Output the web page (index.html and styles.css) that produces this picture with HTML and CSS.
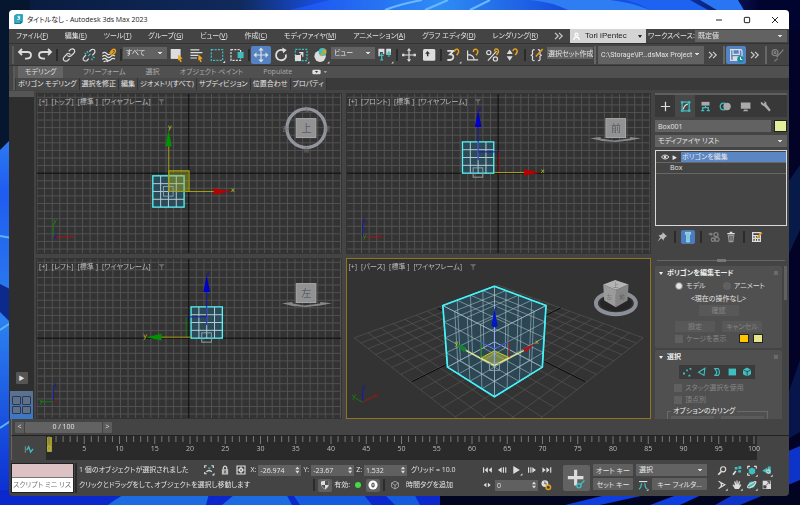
FILE: index.html
```
<!DOCTYPE html>
<html lang="ja">
<head>
    <meta charset="UTF-8">
    <title>タイトルなし - Autodesk 3ds Max 2023</title>
    <link rel="stylesheet" href="styles.css">
</head>
<body>
    <svg class="wallpaper" viewBox="0 0 800 505" preserveAspectRatio="none" aria-hidden="true">
        <defs>
            <linearGradient id="sky" x1="0" x2="1"><stop offset="0" stop-color="#081a3c"/><stop offset=".3" stop-color="#102a5c"/><stop offset=".4" stop-color="#184ee0"/><stop offset=".8" stop-color="#1450e8"/><stop offset=".95" stop-color="#020430"/></linearGradient>
            <linearGradient id="petal" x1="0" x2="1"><stop offset="0" stop-color="#1b4ff0"/><stop offset=".5" stop-color="#2f8cf4"/><stop offset="1" stop-color="#1040d8"/></linearGradient>
            <linearGradient id="side" x1="0" x2="0" y1="0" y2="1"><stop offset="0" stop-color="#2b7cf0"/><stop offset=".15" stop-color="#1f5cf0"/><stop offset=".5" stop-color="#2c80f0"/><stop offset="1" stop-color="#0a2ad0"/></linearGradient>
        </defs>
        <rect width="800" height="505" fill="#020326"/>
        <rect width="800" height="30" fill="url(#sky)"/>
        <path d="M290 10L330 0H560L590 10Z" fill="url(#petal)"/>
        <path d="M385 10Q400 4 422 0M425 10L448 0M470 10L490 0" stroke="#6bb8ff" stroke-width="2" fill="none"/>
        <path d="M530 0Q552 2 568 10H650Q630 2 610 0Z" fill="#2f7df2"/>
        <path d="M650 10Q636 2 625 0H690L708 10Z" fill="#1d62f0"/>
        <path d="M700 0L720 12H745L738 0Z" fill="#2a75f4"/>
        <rect width="30" height="150" fill="#07162f"/>
        <path d="M0 150L12 138V505H0Z" fill="url(#side)"/>
        <path d="M0 284L12 290V324L0 312Z" fill="#0b2a8c"/>
        <path d="M0 236L12 238M0 330L12 322M0 428L12 420" stroke="#5ab4f8" stroke-width="2"/>
        <rect y="490" width="440" height="15" fill="#0a28cc"/>
        <path d="M108 505Q122 494 136 490H210L206 505ZM222 505L240 490H284L292 505Z" fill="#1d6be0"/>
        <path d="M300 505L290 490H360L372 505ZM395 505L380 490H412L420 505Z" fill="#145be0"/>
        <path d="M440 490H800V505H440Z" fill="#02051f"/>
        <path d="M565 505L610 494H650L600 505ZM650 505L690 490H712L680 505Z" fill="#0e3de0"/>
        <path d="M786 452L800 446V480L740 505H715L786 465Z" fill="#0d33c8"/>
        <path d="M786 400L800 360V432L786 440Z" fill="#08154a"/>
        <path d="M786 185L800 165V230L786 260Z" fill="#071a48"/>
    </svg>

    <main class="window">
        <header class="titlebar">
            <svg class="app-icon" viewBox="0 0 27 33"><path d="M1 5L7 1H26V25L20 30H1Z" fill="#127f97"/><path d="M1 5L7 1H26V22H1Z" fill="#2ba7bf"/><path d="M10 7H17V11H12H17V16H9" fill="none" stroke="#fff" stroke-width="2.5"/><path d="M4 24H18" stroke="#c4eef4" stroke-width="2"/></svg>
            <h1>タイトルなし - Autodesk 3ds Max 2023</h1>
            <button class="win-btn" aria-label="最小化"><svg viewBox="0 0 24 24"><path d="M3 12H21"/></svg></button>
            <button class="win-btn" aria-label="最大化"><svg viewBox="0 0 24 24"><rect x="4" y="4" width="16" height="16" rx="2"/></svg></button>
            <button class="win-btn" aria-label="閉じる"><svg viewBox="0 0 24 24"><path d="M3 3L21 21M21 3L3 21"/></svg></button>
        </header>

        <nav class="menubar">
            <div class="menus">
                <button>ファイル(<u>F</u>)</button>
                <button>編集(<u>E</u>)</button>
                <button>ツール(<u>T</u>)</button>
                <button>グループ(<u>G</u>)</button>
                <button>ビュー(<u>V</u>)</button>
                <button>作成(<u>C</u>)</button>
                <button>モディファイヤ(<u>M</u>)</button>
                <button>アニメーション(<u>A</u>)</button>
                <button>グラフ エディタ(<u>D</u>)</button>
                <button>レンダリング(<u>R</u>)</button>
            </div>
            <button class="more" aria-label="その他のメニュー"><svg viewBox="0 0 30 30"><path d="M5 7L13 15L5 23M15 7L23 15L15 23"/></svg></button>
            <button class="user"><svg viewBox="0 0 30 30"><circle cx="15" cy="9" r="5"/><path d="M6 27Q6 17 15 17Q24 17 24 27"/></svg><span>Tori iPentec</span><i class="caret"></i></button>
            <label class="ws-label" for="workspace">ワークスペース:</label>
            <select id="workspace" class="ws-select"><option>既定値</option></select>
        </nav>

        <div class="toolbar">
            <i class="grip"></i>
            <button class="tool" aria-label="元に戻す"><svg viewBox="0 0 60 60"><path class="fat" d="M12 20H38Q50 20 50 31Q50 42 34 42H30M20 10L10 20L20 30"/></svg></button>
            <button class="tool" aria-label="やり直し"><svg viewBox="0 0 60 60"><path class="fat" d="M48 20H22Q10 20 10 31Q10 42 26 42H30M40 10L50 20L40 30"/></svg></button>
            <i class="sep"></i>
            <button class="tool" aria-label="リンク"><svg viewBox="0 0 60 60"><path class="mid" d="M29 18L36 11Q43 7 48 13Q51 19 46 24L36 33Q30 37 25 31M32 42L25 49Q18 53 12 47Q9 41 14 36L24 26Q30 23 35 29"/></svg></button>
            <button class="tool" aria-label="リンク解除"><svg viewBox="0 0 60 60"><path class="mid" d="M31 19L38 12Q45 9 49 14Q52 20 47 25L41 31M29 42L23 49Q16 52 11 46Q9 41 14 36L20 30"/><path class="teal" d="M23 17L27 23M15 23L21 27M38 42L42 47M42 36L49 39M27 34L35 26"/></svg></button>
            <button class="tool" aria-label="スペースワープにバインド"><svg viewBox="0 0 60 60"><path class="mid" d="M8 25Q15 18 22 25T34 26M8 35Q15 28 22 35T36 35T50 33M8 45Q15 38 22 45T36 45T50 43M12 53Q20 47 27 53"/><path class="gold" d="M33 24L40 14Q47 8 51 14Q53 19 48 24L40 31M35 28L45 17"/></svg></button>
            <i class="sep"></i>
            <select class="filter" aria-label="選択フィルタ"><option>すべて</option></select>
            <button class="tool" aria-label="オブジェクトを選択"><svg viewBox="0 0 60 60"><rect x="9" y="10" width="33" height="33" fill="#ddd"/><path class="pick" d="M34 28L49 42L42 43L46 52L41 54L37 45L33 49Z"/></svg></button>
            <button class="tool" aria-label="名前で選択"><svg viewBox="0 0 60 60"><path class="mid" d="M8 13H38M8 22H48M8 31H34M8 40H30"/><path class="pick" d="M35 28L49 42L42 43L46 52L41 54L37 45L34 49Z"/></svg></button>
            <button class="tool" aria-label="矩形選択領域"><svg viewBox="0 0 60 60"><rect class="teal dash" x="11" y="12" width="38" height="36"/><path d="M57 49V57H49Z" fill="#ddd"/></svg></button>
            <button class="tool" aria-label="窓/交差"><svg viewBox="0 0 60 60"><rect class="mid dash" x="10" y="12" width="32" height="36"/><rect x="32" y="20" width="20" height="20" fill="#3dbfc0"/></svg></button>
            <i class="sep"></i>
            <button class="tool on" aria-label="選択して移動"><svg viewBox="0 0 60 60"><path class="mid" d="M30 9V51M9 30H51"/><path d="M30 5L39 15H21ZM30 55L21 45H39ZM5 30L15 21V39ZM55 30L45 39V21Z" fill="#ddd"/></svg></button>
            <button class="tool" aria-label="選択して回転"><svg viewBox="0 0 60 60"><path class="fat" d="M41 16Q25 8 16 21Q9 35 20 44Q34 52 44 41Q48 35 46 28"/><path d="M34 5L49 13L37 24Z" fill="#ddd"/></svg></button>
            <button class="tool" aria-label="選択してスケール"><svg viewBox="0 0 60 60"><rect class="teal dash" x="11" y="11" width="39" height="38"/><rect x="10" y="30" width="20" height="20" fill="#ddd"/><path class="mid" d="M24 22H36V36M36 22L28 30"/><path d="M58 51V58H51Z" fill="#ddd"/></svg></button>
            <button class="tool" aria-label="選択して配置"><svg viewBox="0 0 60 60"><circle cx="27" cy="34" r="19" fill="#ddd"/><circle cx="35" cy="20" r="13" fill="#3dbfc0"/><path class="gold" d="M29 33L43 17M35 15H45V25"/><path d="M58 51V58H51Z" fill="#ddd"/></svg></button>
            <select class="filter" aria-label="参照座標系"><option>ビュー</option></select>
            <button class="tool" aria-label="基点を使用"><svg viewBox="0 0 60 60"><path d="M8 9H28V27H23V20H13V34H8ZM34 9H50V29H34Z" fill="#ddd"/><path class="teal" d="M19 24V46M12 31H26M43 17V37M36 24H50M14 46H24"/><path d="M58 51V58H51Z" fill="#ddd"/></svg></button>
            <i class="sep"></i>
            <button class="tool" aria-label="選択してマニピュレート"><svg viewBox="0 0 60 60"><path class="mid" d="M30 14V46M14 30H46"/><path d="M30 7L37 16H23ZM30 53L23 44H37ZM7 26H15V34H7ZM45 26H53V34H45Z" fill="#ddd"/></svg></button>
            <button class="tool" aria-label="キーボード ショートカット"><svg viewBox="0 0 60 60"><rect x="10" y="10" width="41" height="39" rx="5" fill="#ddd"/><path d="M25 17L33 26H28V34H23V26H17Z" fill="#333"/></svg></button>
            <i class="sep"></i>
            <button class="tool" aria-label="スナップ"><svg viewBox="0 0 60 60"><path class="fat" d="M11 16H31L20 28Q32 28 31 38Q29 49 11 46"/><path class="gold" d="M35 19Q36 9 45 11Q54 17 42 31"/><path d="M58 51V58H51Z" fill="#ddd"/></svg></button>
            <button class="tool" aria-label="角度スナップ"><svg viewBox="0 0 60 60"><path class="mid" d="M12 15V46H47M12 29Q32 29 34 46"/><path class="gold" d="M31 20Q32 9 41 11Q52 17 40 31"/></svg></button>
            <button class="tool" aria-label="パーセント スナップ"><svg viewBox="0 0 60 60"><circle class="mid" cx="16" cy="22" r="7"/><circle class="mid" cx="38" cy="43" r="7"/><path class="mid" d="M42 17L13 49"/><path class="gold" d="M35 18Q36 7 45 11Q53 18 41 30"/></svg></button>
            <button class="tool" aria-label="スピナー スナップ"><svg viewBox="0 0 60 60"><path d="M19 12L29 27H9ZM19 49L9 34H29Z" fill="#ddd"/><path class="gold" d="M30 17Q32 7 41 11Q49 18 37 30"/></svg></button>
            <i class="sep"></i>
            <button class="tool" aria-label="名前付き選択セットを編集"><svg viewBox="0 0 60 60"><path class="mid" d="M22 12Q13 12 15 23Q17 31 9 31Q17 31 15 40Q13 50 22 49M33 12Q42 12 40 23Q38 31 46 31Q38 31 40 40Q42 50 33 49"/><path class="gold" d="M26 35L49 10"/></svg></button>
            <input class="set-name" type="text" aria-label="選択セット" value="選択セット作成">
            <i class="sep light"></i>
            <select class="project" aria-label="プロジェクト フォルダ"><option>C:\Storage\iP...dsMax Project</option></select>
            <button class="more" aria-label="その他"><svg viewBox="0 0 30 30"><path d="M5 7L13 15L5 23M15 7L23 15L15 23"/></svg></button>
            <i class="sep light"></i>
            <button class="tool on" aria-label="自動保存"><svg viewBox="0 0 60 60"><path class="mid" d="M12 12H47L50 17V48H12ZM20 12V28H41V12"/><rect x="19" y="34" width="23" height="14" fill="#ddd"/><circle cx="45" cy="44" r="11" fill="#128f9a"/><path d="M45 37V45H51" stroke="#fff" stroke-width="3" fill="none"/></svg></button>
            <button class="more" aria-label="その他"><svg viewBox="0 0 30 30"><path d="M5 7L13 15L5 23M15 7L23 15L15 23"/></svg></button>
            <i class="sep light"></i>
            <button class="tool dim" aria-label="ペイント"><svg viewBox="0 0 60 60"><path class="mid" d="M25 38L48 12M18 51L29 42"/><circle class="mid" cx="20" cy="22" r="10"/><circle class="mid" cx="20" cy="22" r="3"/></svg></button>
        </div>

        <section class="ribbon">
            <div class="ribbon-tabs">
                <button class="active">モデリング</button>
                <button>フリーフォーム</button>
                <button>選択</button>
                <button>オブジェクト ペイント</button>
                <button>Populate</button>
                <button class="min-btn" aria-label="リボンを最小化"><svg viewBox="0 0 48 18"><rect x="1" y="2" width="25" height="14" rx="4" fill="#ddd"/><path d="M9 6H18L14 12Z" fill="#333"/><path d="M35 7H45L40 12Z" fill="#bbb"/></svg></button>
            </div>
            <div class="ribbon-panels">
                <button>ポリゴン モデリング</button>
                <button>選択を修正</button>
                <button>編集</button>
                <button>ジオメトリ(すべて)</button>
                <button>サブディビジョン</button>
                <button>位置合わせ</button>
                <button>プロパティ</button>
            </div>
        </section>

        <div class="workspace">
            <aside class="layouts">
                <button class="play" aria-label="レイアウト タブ">▶</button>
                <button class="layout-on" aria-label="4 分割"><i></i><i></i><i></i><i></i></button>
            </aside>

            <div class="viewports">
                <section class="viewport">
                    <svg viewBox="112 12 912 480" preserveAspectRatio="xMidYMid slice">
                        <g class="grid" data-x="568" data-y="251"></g>
                        <g class="mesh" data-x="460" data-y="259"></g>
                        <rect x="508" y="244" width="61" height="62" fill="#b5b52066" stroke="#b5b012" stroke-width="3"/>
                        <path d="M508 170V306H645" class="ax-yellow"/>
                        <path d="M507 122L517 170H498Z" fill="#009400"/><path d="M695 306L643 296V316Z" fill="#b80000"/>
                        <text x="505" y="119" class="t-yellow">y</text><text x="694" y="307" class="t-yellow">x</text>
                        <rect x="492" y="291" width="29" height="29" class="pivot"/>
                        <path d="M161 400V441" class="ax-green"/><path d="M161 443H214" class="ax-red"/>
                        <text x="160" y="401" class="t-green">y</text><text x="161" y="446" class="t-blue">z</text><text x="208" y="446" class="t-red">x</text>
                        <circle cx="921" cy="116" r="58" fill="none" stroke="#92959b" stroke-width="10"/>
                        <rect x="891" y="87" width="59" height="57" class="face"/><text x="907" y="126" class="t-face">上</text>
                        <text x="913" y="64" class="t-dir">北</text><text x="913" y="188" class="t-dir">南</text><text x="850" y="123" class="t-dir">西</text><text x="976" y="123" class="t-dir">東</text>
                    </svg>
                    <p class="vp-label"><span>[+]</span> <span>[トップ]</span> <span>[標準 ]</span> <span>[ワイヤフレーム]</span> <i class="funnel"></i></p>
                </section>

                <section class="viewport">
                    <svg viewBox="18 12 912 480" preserveAspectRatio="xMidYMid slice">
                        <g class="grid" data-x="472" data-y="251"></g>
                        <g class="mesh" data-x="365" data-y="157"></g>
                        <path d="M412 187H474" class="ax-blue"/><path d="M475 187V249" class="ax-red"/>
                        <path d="M460 249H550" class="ax-yellow"/><path d="M412 212V110" class="ax-blue"/>
                        <path d="M412 62L422 112H402Z" fill="#0000c8"/><path d="M598 249L550 239V259Z" fill="#b80000"/>
                        <text x="411" y="63" class="t-blue">z</text><text x="600" y="251" class="t-yellow">x</text>
                        <rect x="397" y="235" width="29" height="28" class="pivot"/>
                        <path d="M65 400V441" class="ax-blue"/><path d="M65 443H118" class="ax-red"/>
                        <text x="64" y="399" class="t-blue">z</text><text x="65" y="447" class="t-green">y</text><text x="113" y="446" class="t-red">x</text>
                        <path d="M748 146L780 142V147L820 153L868 147V142L902 146L868 153L824 157L785 154Z" fill="#85878b"/>
                        <rect x="796" y="87" width="59" height="57" class="face"/><text x="811" y="126" class="t-face">前</text>
                    </svg>
                    <p class="vp-label"><span>[+]</span> <span>[フロント]</span> <span>[標準 ]</span> <span>[ワイヤフレーム]</span> <i class="funnel"></i></p>
                </section>

                <section class="viewport">
                    <svg viewBox="112 12 912 480" preserveAspectRatio="xMidYMid slice">
                        <g class="grid" data-x="568" data-y="251"></g>
                        <g class="mesh" data-x="575" data-y="157"></g>
                        <path d="M560 187H622" class="ax-blue"/><path d="M560 187V249" class="ax-green"/>
                        <path d="M485 248H575" class="ax-yellow"/><path d="M622 212V110" class="ax-blue"/>
                        <path d="M622 62L632 112H612Z" fill="#0000c8"/><path d="M440 248L486 238V258Z" fill="#009400"/>
                        <text x="621" y="62" class="t-blue">z</text><text x="431" y="251" class="t-yellow">y</text>
                        <rect x="607" y="235" width="29" height="28" class="pivot"/>
                        <path d="M161 400V441" class="ax-blue"/><path d="M124 442H161" class="ax-green"/>
                        <text x="160" y="399" class="t-blue">z</text><text x="119" y="446" class="t-green">y</text><text x="162" y="446" class="t-red">x</text>
                        <path d="M848 146L880 142V147L916 153L963 147V142L998 146L963 153L920 157L880 154Z" fill="#85878b"/>
                        <rect x="891" y="87" width="59" height="57" class="face"/><text x="906" y="126" class="t-face">左</text>
                    </svg>
                    <p class="vp-label"><span>[+]</span> <span>[レフト]</span> <span>[標準 ]</span> <span>[ワイヤフレーム]</span> <i class="funnel"></i></p>
                </section>

                <section class="viewport current">
                    <svg viewBox="18 12 912 480" preserveAspectRatio="xMidYMid slice">
                        <g id="ground" class="ground"></g>
                        <path d="M212 382L660 160M290 160L735 382" stroke="#080808" stroke-width="3"/>
                        <path d="M461 95L616 153L605 338L461 427L320 338L306 153Z" fill="#2c4753"/>
                        <g id="cube" class="cube"></g>
                        <path d="M461 95L616 153L605 338L461 427L320 338L306 153Z" fill="none" stroke="#40f4f8" stroke-width="5" stroke-linejoin="round"/>
                        <path d="M461 289L505 309L461 333L420 311Z" fill="#a8b24a99" stroke="#c9c820" stroke-width="3"/>
                        <path d="M375 288L461 333L550 288" fill="none" stroke="#e6e888" stroke-width="4"/>
                        <path d="M461 215V333" stroke="#8fa6ff" stroke-width="3"/><path d="M420 262L461 281L505 262" fill="none" stroke="#2a48e0" stroke-width="3"/>
                        <path d="M420 262V311" class="ax-green"/><path d="M505 262V309" class="ax-red"/>
                        <path d="M461 162L471 214Q461 222 452 214Z" fill="#0018c8"/>
                        <path d="M344 267L376 278L370 293Z" fill="#0a8a28"/><path d="M585 266L546 282L554 295Z" fill="#a01820"/>
                        <text x="341" y="271" class="t-yellow">y</text><text x="583" y="269" class="t-yellow">x</text><text x="460" y="167" class="t-blue">z</text>
                        <path d="M446 326H476V348H446Z" class="pivot"/>
                        <path d="M65 405V443" class="ax-blue"/><path d="M65 443L106 423" class="ax-red"/><path d="M65 443L42 431" class="ax-green"/>
                        <text x="64" y="404" class="t-blue">z</text><text x="33" y="431" class="t-green">y</text><text x="101" y="428" class="t-red">x</text>
                        <ellipse cx="826" cy="146" rx="48" ry="24" fill="#252525"/>
                        <ellipse cx="826" cy="146" rx="60" ry="33" fill="none" stroke="#8b9098" stroke-width="12"/>
                        <path d="M788 90L824 76L864 90L826 106Z" fill="#b4b4b4"/><path d="M788 90L826 106V158L791 138Z" fill="#9b9b9b"/><path d="M864 90L826 106V158L861 138Z" fill="#858585"/>
                        <text x="817" y="98" class="t-dir">上</text><text x="798" y="132" class="t-dir">左</text><text x="836" y="132" class="t-dir dark">前</text>
                    </svg>
                    <p class="vp-label"><span>[+]</span> <span>[パース]</span> <span>[標準 ]</span> <span>[ワイヤフレーム]</span> <i class="funnel"></i></p>
                </section>
            </div>

            <aside class="panel">
                <div class="panel-tabs">
                    <button aria-label="作成"><svg viewBox="0 0 42 42"><path class="mid" d="M21 6V36M6 21H36"/></svg></button>
                    <button class="active" aria-label="修正"><svg viewBox="0 0 42 42"><path class="teal" d="M10 7V35H33V7Z"/><path class="mid" d="M14 30Q16 17 29 13"/><path d="M6 4H14V11H6ZM29 4H37V11H29ZM6 31H14V38H6ZM29 31H37V38H29Z" fill="#3dbfc0"/></svg></button>
                    <button aria-label="階層"><svg viewBox="0 0 42 42"><rect x="8" y="6" width="26" height="12" fill="#aaa"/><path class="teal" d="M21 18V25M12 34V25H30V34M7 34H17M25 34H35"/></svg></button>
                    <button aria-label="モーション"><svg viewBox="0 0 42 42"><circle class="teal" cx="15" cy="21" r="11"/><circle cx="26" cy="21" r="12" fill="#aaa"/></svg></button>
                    <button aria-label="表示"><svg viewBox="0 0 42 42"><path d="M6 8H37V28H6ZM17 31H26L30 36H13Z" fill="#aaa"/></svg></button>
                    <button aria-label="ユーティリティ"><svg viewBox="0 0 42 42"><path d="M8 6L15 12L19 8L16 4Q25 5 24 14L38 32L33 37L17 20Q8 19 5 10Z" fill="#aaa"/></svg></button>
                </div>
                <div class="name-row">
                    <input type="text" aria-label="オブジェクト名" value="Box001">
                    <button class="swatch" aria-label="オブジェクト カラー"></button>
                </div>
                <select class="mod-list" aria-label="モディファイヤ リスト"><option>モディファイヤ リスト</option></select>
                <ul class="stack">
                    <li class="selected"><svg viewBox="0 0 36 24"><path d="M4 12Q15 0 27 12Q15 24 4 12Z" fill="none" stroke="#ddd" stroke-width="3"/><circle cx="15" cy="12" r="4" fill="#ddd"/></svg><b>▶</b><span>ポリゴンを編集</span></li>
                    <li><span>Box</span></li>
                </ul>
                <div class="stack-tools">
                    <button aria-label="スタックを固定"><svg viewBox="0 0 42 42"><path d="M23 7L36 19L31 21L26 28L27 32L19 25L7 35L16 22L10 16L15 16L22 12Z" fill="#bbb"/></svg></button>
                    <i class="sep"></i>
                    <button class="on" aria-label="最終結果を表示"><svg viewBox="0 0 42 42"><path d="M13 7H29V13H25V36H17V13H13Z" fill="#67d0dc" stroke="#ddd" stroke-width="2"/></svg></button>
                    <i class="sep"></i>
                    <button class="dim" aria-label="固有にする"><svg viewBox="0 0 42 42"><circle class="mid" cx="27" cy="14" r="6"/><circle class="mid" cx="30" cy="28" r="6"/><circle class="mid" cx="18" cy="29" r="5"/><path class="mid" d="M5 12H17M12 8V17"/></svg></button>
                    <button aria-label="モディファイヤを除去"><svg viewBox="0 0 42 42"><path d="M11 14H31L28 37H14Z" fill="#999"/><path class="mid" d="M10 11H32M17 7H25"/><path d="M17 18V32M21 18V32M25 18V32" stroke="#444" stroke-width="2"/></svg></button>
                    <i class="sep"></i>
                    <button aria-label="モディファイヤ セットを設定"><svg viewBox="0 0 42 42"><path class="mid" d="M8 8H31V34H8ZM8 17H31M8 25H31M16 17V34M23 17V34"/><path class="gold" d="M21 24L35 8"/></svg></button>
                </div>
                <div class="splitter"><i></i></div>
                <div class="rollouts">
                    <section class="rollout">
                        <h2><i class="caret"></i>ポリゴンを編集モード<i class="dots"></i></h2>
                        <div class="row modes">
                            <label><input type="radio" name="mode" checked> モデル</label>
                            <label><input type="radio" name="mode"> アニメート</label>
                        </div>
                        <p class="operation">&lt;現在の操作なし&gt;</p>
                        <div class="row center"><button class="btn" disabled>確認</button></div>
                        <div class="row center pair"><button class="btn" disabled>設定</button><button class="btn" disabled>キャンセル</button></div>
                        <div class="row cage">
                            <label class="off"><input type="checkbox" disabled> ケージを表示</label>
                            <button class="chip amber" aria-label="ケージ カラー"></button><button class="chip cream" aria-label="選択ケージ カラー"></button>
                        </div>
                    </section>
                    <section class="rollout last">
                        <h2><i class="caret"></i>選択<i class="dots"></i></h2>
                        <div class="sub-objects">
                            <button aria-label="頂点"><svg viewBox="0 0 42 42"><path d="M7 23h7v7h-7zM18 12h6v6h-6zM30 7h6v6h-6zM26 31h7v6h-7z" fill="#3dbfc0"/></svg></button>
                            <button aria-label="エッジ"><svg viewBox="0 0 42 42"><path class="teal" d="M31 8L9 22L28 33Z"/></svg></button>
                            <button aria-label="境界"><svg viewBox="0 0 42 42"><path class="teal" d="M13 9H25Q34 21 25 33H12Q22 29 20 20Z"/></svg></button>
                            <button aria-label="ポリゴン"><svg viewBox="0 0 42 42"><rect x="9" y="9" width="26" height="24" fill="#3dbfc0"/></svg></button>
                            <button aria-label="要素"><svg viewBox="0 0 42 42"><path d="M21 5L34 12L21 18L8 12ZM7 14L20 21V36L7 29ZM35 14L23 21V36L35 29Z" fill="#3dbfc0"/></svg></button>
                        </div>
                        <label class="off check"><input type="checkbox" disabled> スタック選択を使用</label>
                        <label class="off check"><input type="checkbox" disabled> 頂点別</label>
                        <fieldset><legend>オプションのカリング</legend><div><i></i><i></i></div></fieldset>
                    </section>
                </div>
            </aside>
        </div>

        <div class="time-slider">
            <button aria-label="前のフレーム">&lt;</button>
            <button class="thumb">0 / 100</button>
            <button aria-label="次のフレーム">&gt;</button>
        </div>

        <div class="trackbar">
            <button class="curve" aria-label="ミニ カーブ エディタ"><svg viewBox="0 0 36 30"><path d="M7 5V25" stroke="#aaa" stroke-width="2"/><path class="teal" d="M11 17L17 7L23 23L30 13"/></svg></button>
            <svg id="track" class="track" viewBox="0 0 711 24"><rect x="1" y="1" width="5" height="15" fill="#a59c20"/></svg>
        </div>

        <footer class="status">
            <div class="script">
                <input class="pink" type="text" aria-label="マクロ記録">
                <input class="white" type="text" aria-label="リスナー" value="スクリプト ミニ リス">
            </div>
            <div class="messages">
                <div class="status-row">
                    <p>1 個のオブジェクトが選択されました</p>
                    <button class="small-tool push" aria-label="選択の分離"><svg viewBox="0 0 42 42"><path class="mid" d="M6 14V6H13M29 6H36V14M6 28V34H13"/><path class="teal" d="M18 14H26M22 12V19"/><path class="mid" d="M12 27Q21 19 31 27"/><path d="M40 31V40H31Z" fill="#ddd"/></svg></button>
                    <button class="small-tool" aria-label="選択をロック"><svg viewBox="0 0 42 42"><rect x="10" y="18" width="22" height="19" fill="#bbb"/><path class="mid" d="M15 18V12Q21 3 27 12V18"/><path d="M21 23V32" stroke="#333" stroke-width="4"/></svg></button>
                    <button class="small-tool" aria-label="座標モード"><svg viewBox="0 0 42 42"><path class="mid" d="M7 7H35V35H7Z"/><circle cx="21" cy="21" r="8" fill="#ddd"/><path class="mid" d="M21 9V33M9 21H33"/><circle cx="21" cy="21" r="3" fill="#444"/></svg></button>
                    <label class="coord">X: <input type="text" value="-26.974"><i class="spin"></i></label>
                    <label class="coord">Y: <input type="text" value="-23.67"><i class="spin"></i></label>
                    <label class="coord">Z: <input type="text" value="1.532"><i class="spin"></i></label>
                    <span class="grid-size">グリッド = 10.0</span>
                </div>
                <div class="status-row">
                    <p>クリックとドラッグをして、オブジェクトを選択し移動します</p>
                    <i class="sep push"></i>
                    <button class="small-tool raised" aria-label="劣化保護"><svg viewBox="0 0 42 42"><path d="M7 9Q21 3 35 9Q38 28 21 37Q4 28 7 9Z" fill="#ddd"/><path d="M21 7H34V21H21ZM9 21H21V35Q10 30 9 21Z" fill="#555"/></svg></button>
                    <span>有効:</span><i class="led"></i>
                    <button class="small-tool raised" aria-label="通知"><svg viewBox="0 0 42 42"><circle cx="21" cy="21" r="16" fill="#fff"/><ellipse cx="21" cy="21" rx="4" ry="7" fill="none" stroke="#444" stroke-width="4"/></svg></button>
                    <i class="sep"></i>
                    <button class="small-tool" aria-label="タグ"><svg viewBox="0 0 42 42"><path d="M21 8L33 14V28L21 35L9 28V14ZM9 14L21 22L33 14M21 22V35" fill="none" stroke="#aaa" stroke-width="3"/></svg></button>
                    <span class="time-tag">時間タグを追加</span>
                </div>
            </div>
            <div class="playback">
                <div class="status-row">
                    <button class="small-tool" aria-label="開始"><svg viewBox="0 0 42 42"><path d="M7 11H11V31H7ZM24 11V31L13 21ZM38 11V31L27 21Z" fill="#ddd"/></svg></button>
                    <button class="small-tool" aria-label="前"><svg viewBox="0 0 42 42"><path d="M20 11V31L7 21ZM24 11H28V31H24ZM32 11H36V31H32Z" fill="#ddd"/></svg></button>
                    <button class="small-tool" aria-label="再生"><svg viewBox="0 0 42 42"><path d="M8 7L31 21L8 35ZM40 32V40H32Z" fill="#ddd"/></svg></button>
                    <button class="small-tool" aria-label="次"><svg viewBox="0 0 42 42"><path d="M22 11V31L35 21ZM7 11H11V31H7ZM15 11H19V31H15Z" fill="#ddd"/></svg></button>
                    <button class="small-tool" aria-label="終了"><svg viewBox="0 0 42 42"><path d="M32 11H36V31H32ZM5 11V31L16 21ZM19 11V31L30 21Z" fill="#ddd"/></svg></button>
                </div>
                <div class="status-row">
                    <button class="small-tool" aria-label="キー モード"><svg viewBox="0 0 42 42"><path d="M19 13V29L9 21ZM24 13V29L34 21Z" fill="#ddd"/></svg></button>
                    <label class="coord frame"><input type="text" value="0" aria-label="フレーム"><i class="spin"></i></label>
                    <button class="small-tool" aria-label="時間設定"><svg viewBox="0 0 42 42"><circle cx="17" cy="16" r="12" fill="#ddd"/><path d="M17 9V17H24" stroke="#444" stroke-width="3" fill="none"/><circle cx="29" cy="29" r="8" fill="none" stroke="#e5a11c" stroke-width="5"/></svg></button>
                </div>
            </div>
            <button class="set-key" aria-label="キーを設定"><svg viewBox="0 0 78 78"><path d="M32 14H41V32H59V41H41V59H32V41H14V32H32Z" fill="#ddd"/><path class="teal" d="M49 58L62 45"/><circle class="teal" cx="46" cy="60" r="6"/></svg></button>
            <div class="keys">
                <button class="btn">オート キー</button>
                <select aria-label="キー対象"><option>選択</option></select>
                <button class="btn">セット キー</button>
                <div class="key-filter">
                    <button class="small-tool" aria-label="接線タイプ"><svg viewBox="0 0 42 42"><path class="teal" d="M7 36Q15 30 16 15M36 36Q28 30 27 15"/><path class="mid" d="M7 9H36"/><path d="M40 34V41H33Z" fill="#ddd"/></svg></button>
                    <button class="btn">キー フィルタ...</button>
                </div>
            </div>
            <div class="nav-tools">
                <button class="small-tool" aria-label="ズーム"><svg viewBox="0 0 42 42"><circle class="mid" cx="25" cy="15" r="9"/><path class="fat" d="M18 23L8 34"/></svg></button>
                <button class="small-tool" aria-label="すべてズーム"><svg viewBox="0 0 42 42"><path d="M13 7H23V16H13ZM26 4H36V14H26ZM25 18H35V26H25Z" fill="#3dbfc0"/><path class="fat" d="M17 21L7 34"/></svg></button>
                <button class="small-tool" aria-label="全範囲ズーム"><svg viewBox="0 0 42 42"><path class="mid" d="M6 13V5H14M28 5H36V13M6 28V36H14"/><path d="M21 9L32 15V28L21 34L10 28V15Z" fill="#3dbfc0"/><path d="M41 33V41H33Z" fill="#ddd"/></svg></button>
                <button class="small-tool" aria-label="すべての全範囲ズーム"><svg viewBox="0 0 42 42"><path d="M4 20L22 9V30ZM24 5H34V31H24Z" fill="#3dbfc0"/><circle class="mid" cx="26" cy="23" r="6"/><path d="M41 33V41H33Z" fill="#ddd"/></svg></button>
                <button class="small-tool" aria-label="視野"><svg viewBox="0 0 42 42"><path class="mid" d="M9 8L31 20L9 33M16 13Q23 20 16 28"/><path d="M41 33V41H33Z" fill="#ddd"/></svg></button>
                <button class="small-tool" aria-label="パン"><svg viewBox="0 0 42 42"><path d="M14 35L5 21L9 19L14 24L11 9L15 8L19 19L19 5H23L24 19L28 8H32L29 22L34 18L36 21L28 35Z" fill="#ddd"/><path d="M41 33V41H33Z" fill="#ddd"/></svg></button>
                <button class="small-tool" aria-label="オービット"><svg viewBox="0 0 42 42"><circle cx="20" cy="20" r="11" fill="#3dbfc0"/><path class="mid" d="M6 30Q3 21 24 12Q37 6 34 13Q31 23 13 31Z"/><path d="M41 33V41H33Z" fill="#ddd"/></svg></button>
                <button class="small-tool" aria-label="ビューポートを最大化"><svg viewBox="0 0 42 42"><path d="M6 6H35V35H6Z" fill="#ddd"/><path d="M8 22H19V33H8Z" fill="#444"/><path d="M20 20L31 9M22 9H31V18" fill="none" stroke="#333" stroke-width="3"/></svg></button>
            </div>
        </footer>
    </main>
    <script src="script.js"></script>
</body>
</html>
```
FILE: styles.css
```
* {
    margin: 0;
    padding: 0;
    box-sizing: border-box;
}

body {
    height: 100vh;
    display: flex;
    padding: 10px 11px 9px 9px;
    font-family: "Open Sans", "Noto Sans CJK JP", sans-serif;
    font-size: 7px;
    line-height: 10px;
    font-feature-settings: "palt";
    color: #e4e4e4;
    background: #020326;
    overflow: hidden;
}

.wallpaper {
    position: fixed;
    inset: 0;
    width: 100%;
    height: 100%;
    z-index: -1;
}

button, input, select {
    font: inherit;
    font-feature-settings: inherit;
    color: inherit;
    border: none;
    background: none;
    white-space: nowrap;
}

select {
    appearance: none;
    padding: 0 10px 0 3px;
    background-color: #626262;
    background-image: linear-gradient(to bottom left, #ddd 50%, transparent 50%), linear-gradient(to bottom right, #ddd 50%, transparent 50%);
    background-size: 2px 3px, 2px 3px;
    background-position: right 7px center, right 5px center;
    background-repeat: no-repeat;
}

input {
    min-width: 0;
    outline: none;
}

svg {
    display: block;
}

.fat, .mid, .teal, .gold {
    fill: none;
    stroke: #ddd;
    stroke-width: 4;
}

.fat { stroke-width: 6; }
.teal { stroke: #3dbfc0; }
.gold { stroke: #e5a11c; stroke-width: 5; }
.dash { stroke-dasharray: 7 4; }
.pick { fill: #f0a820; }

.caret {
    border: 3px solid transparent;
    border-top: 4px solid currentColor;
    border-bottom: 0;
}

.sep {
    width: 2px;
    height: 12px;
    margin: 0 1px;
    background: #2b2b2b;
    flex: none;
}

.sep.light {
    height: 18px;
    background: #666;
}

.window {
    flex: 1;
    min-width: 0;
    display: flex;
    flex-direction: column;
    background: #444;
    border-radius: 4px;
    overflow: hidden;
}

/* title and menu */
.titlebar {
    display: flex;
    align-items: center;
    flex: none;
    height: 19px;
    padding-left: 5px;
    background: #fff;
    color: #222;
}

.titlebar h1 {
    flex: 1;
    padding-left: 4px;
    font-size: 7px;
    font-weight: normal;
}

.app-icon {
    width: 9px;
    height: 11px;
}

.win-btn {
    width: 28px;
    display: flex;
    justify-content: center;
}

.win-btn svg {
    width: 8px;
    fill: none;
    stroke: #222;
    stroke-width: 3;
}

.menubar {
    display: flex;
    align-items: center;
    flex: none;
    height: 15px;
    padding-right: 2px;
    border-bottom: 1px solid #333;
}

.menus {
    flex: 1;
    display: flex;
    justify-content: space-between;
    padding: 0 15px 0 7px;
}

.more svg {
    width: 12px;
    fill: none;
    stroke: #ccc;
    stroke-width: 3;
}

.menubar .more {
    margin-right: 5px;
}

.user {
    display: flex;
    align-items: center;
    gap: 4px;
    width: 76px;
    height: 14px;
    padding: 0 4px 0 2px;
    background: #d4d4d4;
    color: #222;
    font-family: "Liberation Sans", sans-serif;
    font-size: 8px;
}

.user svg {
    width: 9px;
    fill: none;
    stroke: #fff;
    stroke-width: 4;
}

.user .caret {
    margin-left: auto;
    border-width: 3px 2px 0;
}

.ws-label {
    width: 49px;
    padding-left: 2px;
    white-space: nowrap;
}

.ws-select {
    width: 92px;
    height: 12px;
}

/* main toolbar */
.toolbar {
    display: flex;
    align-items: center;
    flex: none;
    height: 22px;
    padding-right: 1px;
    border-bottom: 1px solid #333;
}

.grip {
    width: 2px;
    height: 18px;
    margin: 0 1px 0 3px;
    background: #5a5a5a;
}

.tool {
    flex: none;
    width: 20px;
    height: 18px;
    display: flex;
    align-items: center;
    justify-content: center;
}

.tool svg {
    width: 18px;
    height: 18px;
}

.tool.on {
    background: #5483c4;
    border-radius: 2px;
}

.dim {
    opacity: .4;
}

.filter {
    width: 44px;
    height: 12px;
    margin-bottom: 3px;
    flex: none;
}

.set-name {
    width: 46px;
    height: 12px;
    padding-left: 1px;
    margin-bottom: 3px;
    background: #626262;
    flex: none;
}

.project {
    flex: 1;
    min-width: 0;
    height: 18px;
    margin-left: 1px;
    font-family: Roboto, sans-serif;
}

.toolbar .more {
    margin: 0 3px;
}

/* ribbon */
.ribbon {
    flex: none;
    margin: 0 0 1px 4px;
    border-left: 2px solid #5a5a5a;
}

.ribbon-tabs {
    display: flex;
    align-items: center;
    gap: 20px;
    height: 12px;
    padding-left: 3px;
    background: #505050;
    color: #aaa;
}

.ribbon-tabs .active {
    width: 45px;
    height: 12px;
    background: #656565;
    color: #ddd;
}

.ribbon-tabs .min-btn svg {
    width: 16px;
}

.ribbon-panels {
    display: flex;
    height: 12px;
    padding-left: 1px;
    background: #3a3a3a;
}

.ribbon-panels button {
    padding: 0 2px;
    background: #484848;
    border-right: 1px solid #333;
}

/* viewports */
.workspace {
    flex: 1;
    min-height: 0;
    display: flex;
}

.layouts {
    width: 25px;
    display: flex;
    flex-direction: column;
    align-items: center;
    justify-content: flex-end;
    gap: 7px;
    background: #2e2e2e;
    border-top: 6px solid #555;
}

.play {
    width: 12px;
    height: 12px;
    background: #555;
    font-size: 6px;
    border-radius: 1px;
}

.layout-on {
    display: grid;
    grid-template: 1fr 1fr / 1fr 1fr;
    gap: 1px;
    width: 23px;
    height: 28px;
    padding: 5px 2px;
    background: linear-gradient(#5d718c, #3b78c8);
}

.layout-on i {
    background: #607088;
    border: 1px solid #273850;
    border-radius: 1px;
}

.viewports {
    flex: 1;
    min-width: 0;
    display: grid;
    grid-template: repeat(2, minmax(0, 1fr)) / repeat(2, minmax(0, 1fr));
    gap: 4px;
    padding: 2px 1px 0 2px;
}

.viewport {
    position: relative;
    background: #333;
    border: 1px solid #333;
    overflow: hidden;
}

.viewport.current {
    border-color: #91731c;
}

.viewport > svg {
    width: 100%;
    height: 100%;
    font-family: "DejaVu Sans", "Noto Sans CJK JP", sans-serif;
    font-size: 20px;
}

.vp-label {
    position: absolute;
    top: 3px;
    left: 2px;
    display: flex;
    gap: 4px;
    color: #bbb;
    white-space: nowrap;
}

.funnel {
    margin: 2px 0 0 4px;
    width: 6px;
    height: 6px;
    background: #666;
    clip-path: polygon(0 0, 100% 0, 60% 50%, 60% 100%, 40% 100%, 40% 50%);
}

.grid path { stroke: #525252; stroke-width: 3; }
.grid .origin { stroke: #0c0c0c; }
.mesh rect { fill: #2c4b58; stroke: #54f3f5; stroke-width: 4; }
.mesh path { stroke: #b4ccd8; stroke-width: 3; fill: none; }
.ground path { stroke: #565656; stroke-width: 2; }
.cube path { stroke: #adc4cd; stroke-width: 2; opacity: .85; }
.ax-yellow, .ax-blue, .ax-red, .ax-green { fill: none; stroke-width: 3; }
.ax-yellow { stroke: #a8a012; }
.ax-blue { stroke: #1818b0; }
.ax-red { stroke: #a01818; }
.ax-green { stroke: #117a11; }
.t-yellow { fill: #c8c414; }
.t-blue { fill: #1010c8; }
.t-red { fill: #a81010; }
.t-green { fill: #109010; }
.pivot { fill: none; stroke: #8da0a8; stroke-width: 3; }
.face { fill: #929292; stroke: #a8a8a8; stroke-width: 3; }
.t-face { fill: #555d66; font-size: 30px; }
.t-dir { fill: #777; font-size: 17px; }
.t-dir.dark { fill: #606060; }

/* command panel */
.panel {
    width: 137px;
    min-height: 0;
    display: flex;
    flex-direction: column;
    padding: 2px 2px 0 3px;
    background: #444;
}

.panel-tabs {
    display: flex;
    flex: none;
    height: 24px;
    border-top: 2px solid #5e5e5e;
    background: #383838;
}

.panel-tabs button {
    width: 20px;
    display: flex;
    align-items: center;
    justify-content: center;
}

.panel-tabs .active {
    background: #484848;
}

.panel-tabs svg {
    width: 13px;
}

.name-row {
    display: flex;
    flex: none;
    gap: 3px;
    margin: 3px 0;
}

.name-row input {
    flex: 1;
    height: 12px;
    padding-left: 3px;
    background: #626262;
}

.swatch {
    width: 13px;
    background: #e1ef9b;
    border: 1px solid #222;
}

.mod-list {
    width: 100%;
    height: 12px;
    flex: none;
}

.stack {
    height: 76px;
    flex: none;
    margin: 3px 0;
    border: 1px solid #d8d8d8;
    list-style: none;
    padding-top: 1px;
}

.stack li {
    height: 11px;
    padding-left: 14px;
    border-bottom: 1px solid #666;
}

.stack .selected {
    display: flex;
    align-items: center;
    padding-left: 4px;
}

.stack svg {
    width: 12px;
}

.stack b {
    width: 9px;
    font-size: 5px;
}

.stack .selected span {
    flex: 1;
    background: #5a87c4;
    padding-left: 1px;
}

.stack-tools {
    display: flex;
    flex: none;
    align-items: center;
    gap: 3px;
    height: 16px;
}

.stack-tools svg {
    width: 14px;
}

.stack-tools .on {
    background: #4a7cc0;
    border-radius: 2px;
}

.stack-tools .sep {
    margin: 0 2px;
}

.splitter {
    flex: none;
    height: 3px;
    margin: 14px 2px 4px;
    display: flex;
    align-items: center;
    justify-content: center;
    background: linear-gradient(#666, #666) no-repeat center / 100% 1px;
}

.splitter i {
    width: 9px;
    height: 3px;
    background: #777;
}

.rollouts {
    flex: 1;
    min-height: 0;
    padding-right: 5px;
    overflow: hidden;
    background: linear-gradient(#606060, #606060) no-repeat right top / 3px 34px;
}

.rollout {
    height: 82px;
    padding: 2px 4px;
    margin-bottom: 2px;
    background: #505050;
    border-radius: 2px;
}

.rollout h2 {
    display: flex;
    align-items: center;
    gap: 4px;
    font-size: 7px;
    color: #eee;
}

.rollout h2 .caret {
    border-width: 3px 2px 0;
}

.dots {
    margin-left: auto;
    width: 4px;
    height: 4px;
    background: #6b6b6b;
}

.row {
    display: flex;
    align-items: center;
}

.modes {
    gap: 17px;
    height: 16px;
    padding-left: 16px;
    color: #ddd;
}

.rollout label {
    display: flex;
    align-items: center;
    gap: 3px;
}

.rollout input {
    appearance: none;
    width: 8px;
    height: 8px;
    background: #606060;
}

.rollout input[type="radio"] {
    border-radius: 50%;
}

.rollout input[type="radio"]:checked {
    background: #e4e4e4;
    border: 1px solid #777;
}

.operation {
    text-align: center;
    height: 10px;
}

.center {
    justify-content: center;
    gap: 7px;
    height: 13px;
}

.pair {
    margin-top: 3px;
    height: 12px;
}

.btn {
    width: 40px;
    height: 11px;
    background: #5f5f5f;
    border-radius: 1px;
    line-height: 9px;
}

.btn:disabled {
    background: #585858;
    color: #858585;
}

.off {
    color: #858585;
}

.cage {
    height: 13px;
    gap: 4px;
    padding-left: 16px;
}

.cage label {
    width: 60px;
}

.chip {
    width: 10px;
    height: 9px;
    border: 1px solid #222;
}

.amber { background: #ffc500; }
.cream { background: #e6e58c; }

.rollout.last {
    padding-bottom: 0;
}

.sub-objects {
    display: flex;
    justify-content: space-around;
    width: 76px;
    height: 14px;
    margin: 3px 0 3px 20px;
    background: #3b3b3b;
}

.sub-objects svg {
    width: 12px;
}

.check {
    height: 12px;
    padding-left: 15px;
}

fieldset {
    margin: 0 10px 0 8px;
    height: 25px;
    border: 1px solid #6a6a6a;
    padding: 0 3px;
}

legend {
    padding: 0 2px;
    color: #eee;
}

fieldset div {
    display: flex;
    gap: 7px;
}

fieldset div i {
    flex: 1;
    height: 8px;
    background: #5b5b5b;
}

/* time line */
.time-slider {
    display: flex;
    flex: none;
    align-items: center;
    gap: 1px;
    height: 16px;
    padding: 2px 0 2px 3px;
    margin-left: 2px;
    border-left: 1px solid #666;
}

.time-slider button {
    width: 9px;
    height: 11px;
    background: #5c5c5c;
    border-radius: 1px;
    line-height: 8px;
}

.time-slider .thumb {
    width: 77px;
    background: #626262;
}

.trackbar {
    display: flex;
    flex: none;
    margin-left: 2px;
    padding-right: 32px;
    height: 25px;
    border-top: 1px solid #222;
    border-left: 1px solid #666;
}

.curve {
    width: 34px;
    display: flex;
    justify-content: center;
    padding-top: 3px;
}

.curve svg {
    width: 12px;
}

.track {
    flex: 1;
    min-width: 0;
    height: 24px;
    background: #2a2a2a;
    font-size: 7px;
    overflow: visible;
}

.track text {
    fill: #bbb;
    text-anchor: middle;
}

.track path {
    stroke: #777;
}

/* status bar */
.status {
    display: flex;
    flex: none;
    align-items: center;
    height: 36px;
    padding: 0 15px 1px 2px;
}

.script {
    width: 63px;
    height: 30px;
    display: flex;
    flex-direction: column;
    gap: 1px;
    border: 1px solid #222;
    background: #777;
}

.script input {
    flex: 1;
    width: 100%;
    padding-left: 1px;
}

.pink { background: #dcc2c3; }
.white { background: #fff; color: #777; }

.messages {
    flex: 1;
    min-width: 0;
    padding-left: 2px;
    margin-left: 1px;
    border-left: 2px solid #2a2a2a;
}

.status-row {
    display: flex;
    align-items: center;
    gap: 2px;
    height: 15px;
    white-space: nowrap;
}

.push {
    margin-left: auto;
}

.small-tool {
    flex: none;
    width: 14px;
    height: 13px;
    display: flex;
    align-items: center;
    justify-content: center;
}

.small-tool svg {
    width: 12px;
}

.raised {
    background: #606060;
    border-radius: 2px;
}

.coord {
    display: flex;
    align-items: center;
    gap: 2px;
    position: relative;
}

.coord input {
    width: 43px;
    height: 11px;
    padding-left: 2px;
    background: #606060;
}

.spin {
    position: absolute;
    right: 2px;
    top: 2px;
    width: 4px;
    height: 7px;
    background: #ddd;
    clip-path: polygon(50% 0, 100% 40%, 0 40%, 0 60%, 100% 60%, 50% 100%, 0 60%, 0 40%);
}

.grid-size {
    width: 71px;
    padding-left: 2px;
}

.time-tag {
    width: 76px;
    padding-left: 2px;
}

.led {
    width: 6px;
    height: 6px;
    margin: 0 3px;
    border-radius: 50%;
    background: #44da43;
}

.playback {
    width: 76px;
}

.playback .status-row {
    gap: 1px;
}

.set-key {
    width: 27px;
    height: 26px;
    margin: 0 3px 0 7px;
    background: #626262;
    border-radius: 2px;
}

.keys {
    display: grid;
    grid-template-columns: 39px 71px;
    gap: 2px 4px;
}

.keys .btn, .keys select {
    height: 12px;
}

.key-filter {
    display: flex;
    gap: 2px;
}

.key-filter .btn {
    flex: 1;
}

.nav-tools {
    display: grid;
    grid-template-columns: repeat(4, 14px);
    gap: 1px;
    margin-left: 8px;
}
```
FILE: script.js
```
const NS = 'http://www.w3.org/2000/svg';

function add(parent, tag, attrs, text) {
    const el = document.createElementNS(NS, tag);
    for (const key in attrs) el.setAttribute(key, attrs[key]);
    if (text !== undefined) el.textContent = text;
    parent.appendChild(el);
    return el;
}

// flat home grids
document.querySelectorAll('.grid').forEach(g => {
    const x = Number(g.dataset.x);
    const y = Number(g.dataset.y);
    for (let i = -30; i <= 30; i++) {
        if (i === 0) continue;
        add(g, 'path', { d: `M${x + i * 22.8} -200V700` });
        add(g, 'path', { d: `M-200 ${y + i * 22.8}H1300` });
    }
    add(g, 'path', { d: `M${x} -200V700M-200 ${y}H1300`, class: 'origin' });
});

// box seen from the side, 4 x 4 segments
document.querySelectorAll('.mesh').forEach(g => {
    const x = Number(g.dataset.x);
    const y = Number(g.dataset.y);
    add(g, 'rect', { x: x, y: y, width: 94, height: 94 });
    for (let i = 1; i < 4; i++) {
        add(g, 'path', { d: `M${x + i * 23.5} ${y}v94M${x} ${y + i * 23.5}h94` });
    }
});

// maps the unit square to a quad in perspective
function quad(p) {
    const [[x0, y0], [x1, y1], [x2, y2], [x3, y3]] = p;
    const sx = x0 - x1 + x2 - x3, sy = y0 - y1 + y2 - y3;
    const dx1 = x1 - x2, dx2 = x3 - x2, dy1 = y1 - y2, dy2 = y3 - y2;
    const det = dx1 * dy2 - dx2 * dy1;
    const g = (sx * dy2 - dx2 * sy) / det;
    const h = (dx1 * sy - sx * dy1) / det;
    return (u, v) => {
        const w = g * u + h * v + 1;
        return [((x1 - x0 + g * x1) * u + (x3 - x0 + h * x3) * v + x0) / w,
                ((y1 - y0 + g * y1) * u + (y3 - y0 + h * y3) * v + y0) / w];
    };
}

function drawQuad(parent, points, n) {
    const at = quad(points);
    for (let i = 0; i <= n; i++) {
        const t = i / n;
        add(parent, 'path', { d: `M${at(t, 0)}L${at(t, 1)}` });
        add(parent, 'path', { d: `M${at(0, t)}L${at(1, t)}` });
    }
}

drawQuad(document.getElementById('ground'), [[40, 250], [472, 92], [908, 250], [474, 590]], 14);

const back = [461, 95], left = [306, 153], right = [616, 153], front = [461, 232];
const back2 = [461, 262], left2 = [320, 338], right2 = [605, 338], front2 = [461, 427];
const cube = document.getElementById('cube');
[
    [left, back, right, front],
    [left2, back2, right2, front2],
    [left, front, front2, left2],
    [front, right, right2, front2],
    [left, back, back2, left2],
    [back, right, right2, back2]
].forEach(face => drawQuad(cube, face, 4));

// track bar ticks
const track = document.getElementById('track');
for (let i = 0; i <= 100; i++) {
    const x = 3 + i * 7.05;
    add(track, 'path', { d: `M${x} 0V${i % 5 ? 6 : 8}` });
    if (i % 5 === 0) add(track, 'text', { x: x, y: 15 }, i);
}
```
